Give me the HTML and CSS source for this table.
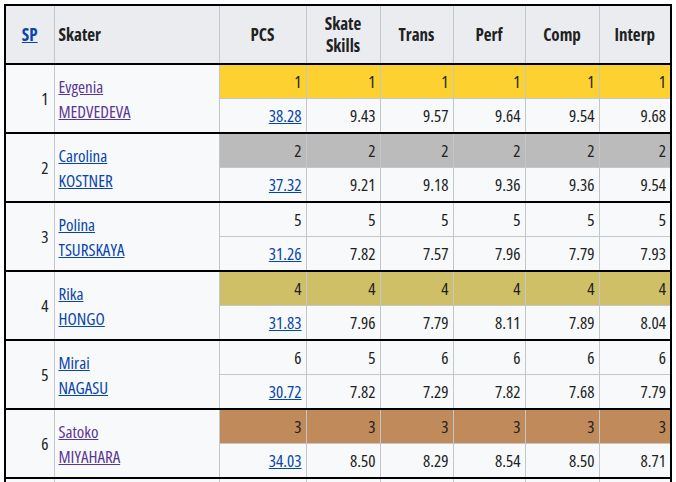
FILE: index.html
```html
<!DOCTYPE html>
<html lang="en">
<head>
<meta charset="utf-8">
<title>Short program results</title>
<link rel="stylesheet" href="styles.css">
</head>
<body>
<table class="results">
  <colgroup>
    <col class="c-sp"><col class="c-skater"><col class="c-pcs"><col class="c-ss"><col class="c-tr"><col class="c-pe"><col class="c-co"><col class="c-in">
  </colgroup>
  <thead>
    <tr>
      <th class="h-sp"><a href="#">SP</a></th>
      <th class="h-skater">Skater</th>
      <th>PCS</th>
      <th>Skate<br>Skills</th>
      <th>Trans</th>
      <th>Perf</th>
      <th>Comp</th>
      <th>Interp</th>
    </tr>
  </thead>
  <tbody class="group">
    <tr class="rank gold"><td class="pos" rowspan="2">1</td><td class="name" rowspan="2"><a class="visited" href="#">Evgenia</a><br><a class="visited" href="#">MEDVEDEVA</a></td><td>1</td><td>1</td><td>1</td><td>1</td><td>1</td><td>1</td></tr>
    <tr class="score"><td><a href="#">38.28</a></td><td>9.43</td><td>9.57</td><td>9.64</td><td>9.54</td><td>9.68</td></tr>
  </tbody>
  <tbody class="group">
    <tr class="rank silver"><td class="pos" rowspan="2">2</td><td class="name" rowspan="2"><a href="#">Carolina</a><br><a href="#">KOSTNER</a></td><td>2</td><td>2</td><td>2</td><td>2</td><td>2</td><td>2</td></tr>
    <tr class="score"><td><a href="#">37.32</a></td><td>9.21</td><td>9.18</td><td>9.36</td><td>9.36</td><td>9.54</td></tr>
  </tbody>
  <tbody class="group">
    <tr class="rank"><td class="pos" rowspan="2">3</td><td class="name" rowspan="2"><a href="#">Polina</a><br><a href="#">TSURSKAYA</a></td><td>5</td><td>5</td><td>5</td><td>5</td><td>5</td><td>5</td></tr>
    <tr class="score"><td><a href="#">31.26</a></td><td>7.82</td><td>7.57</td><td>7.96</td><td>7.79</td><td>7.93</td></tr>
  </tbody>
  <tbody class="group">
    <tr class="rank olive"><td class="pos" rowspan="2">4</td><td class="name" rowspan="2"><a href="#">Rika</a><br><a href="#">HONGO</a></td><td>4</td><td>4</td><td>4</td><td>4</td><td>4</td><td>4</td></tr>
    <tr class="score"><td><a href="#">31.83</a></td><td>7.96</td><td>7.79</td><td>8.11</td><td>7.89</td><td>8.04</td></tr>
  </tbody>
  <tbody class="group">
    <tr class="rank"><td class="pos" rowspan="2">5</td><td class="name" rowspan="2"><a href="#">Mirai</a><br><a href="#">NAGASU</a></td><td>6</td><td>5</td><td>6</td><td>6</td><td>6</td><td>6</td></tr>
    <tr class="score"><td><a href="#">30.72</a></td><td>7.82</td><td>7.29</td><td>7.82</td><td>7.68</td><td>7.79</td></tr>
  </tbody>
  <tbody class="group">
    <tr class="rank bronze"><td class="pos" rowspan="2">6</td><td class="name" rowspan="2"><a class="visited" href="#">Satoko</a><br><a class="visited" href="#">MIYAHARA</a></td><td>3</td><td>3</td><td>3</td><td>3</td><td>3</td><td>3</td></tr>
    <tr class="score"><td><a href="#">34.03</a></td><td>8.50</td><td>8.29</td><td>8.54</td><td>8.50</td><td>8.71</td></tr>
  </tbody>
  <tbody class="group">
    <tr class="rank"><td class="pos" rowspan="2"></td><td class="name" rowspan="2"></td><td></td><td></td><td></td><td></td><td></td><td></td></tr>
    <tr class="score"><td></td><td></td><td></td><td></td><td></td><td></td></tr>
  </tbody>
</table>
</body>
</html>
```

FILE: styles.css
```css
html, body {
  margin: 0;
  padding: 0;
  background: #ffffff;
}

body {
  padding: 4px 0 0 4px;
  font-family: "Open Sans", "DejaVu Sans Condensed", "Liberation Sans", sans-serif;
  font-stretch: 75%;
  font-size: 17px;
  color: #202122;
}

.results {
  border-collapse: collapse;
  table-layout: fixed;
  width: 667px;
  border: 2px solid #000;
  background: #f8f9fa;
}

.c-sp { width: 49px; }
.c-skater { width: 165px; }
.c-pcs { width: 87px; }
.c-ss { width: 74px; }
.c-tr { width: 73px; }
.c-pe { width: 72px; }
.c-co { width: 74px; }
.c-in { width: 72px; }

.results th,
.results td {
  border: 1px solid #c3c7cc;
  padding: 0 4px;
}

.results thead th {
  background: #eaecf0;
  font-weight: bold;
  height: 57px;
  text-align: center;
  vertical-align: middle;
  line-height: 22px;
  border-bottom: 2px solid #000;
}

.results thead th.h-skater {
  text-align: left;
  padding-left: 4px;
}

.results a {
  color: #0645ad;
  text-decoration: underline;
}

.results a.visited {
  color: #5a3696;
}

.group {
  border-top: 2px solid #000;
}

.results td {
  text-align: right;
  vertical-align: middle;
  height: 33px;
}

.results td.pos {
  padding-right: 5px;
}

.results td.name {
  text-align: left;
  padding-left: 4px;
  line-height: 25px;
}

.gold td { background: #fdd12f; }
.silver td { background: #bbbbbb; }
.olive td { background: #cfc068; }
.bronze td { background: #c08a5a; }

.rank td.pos,
.rank td.name {
  background: #f8f9fa;
}
```
